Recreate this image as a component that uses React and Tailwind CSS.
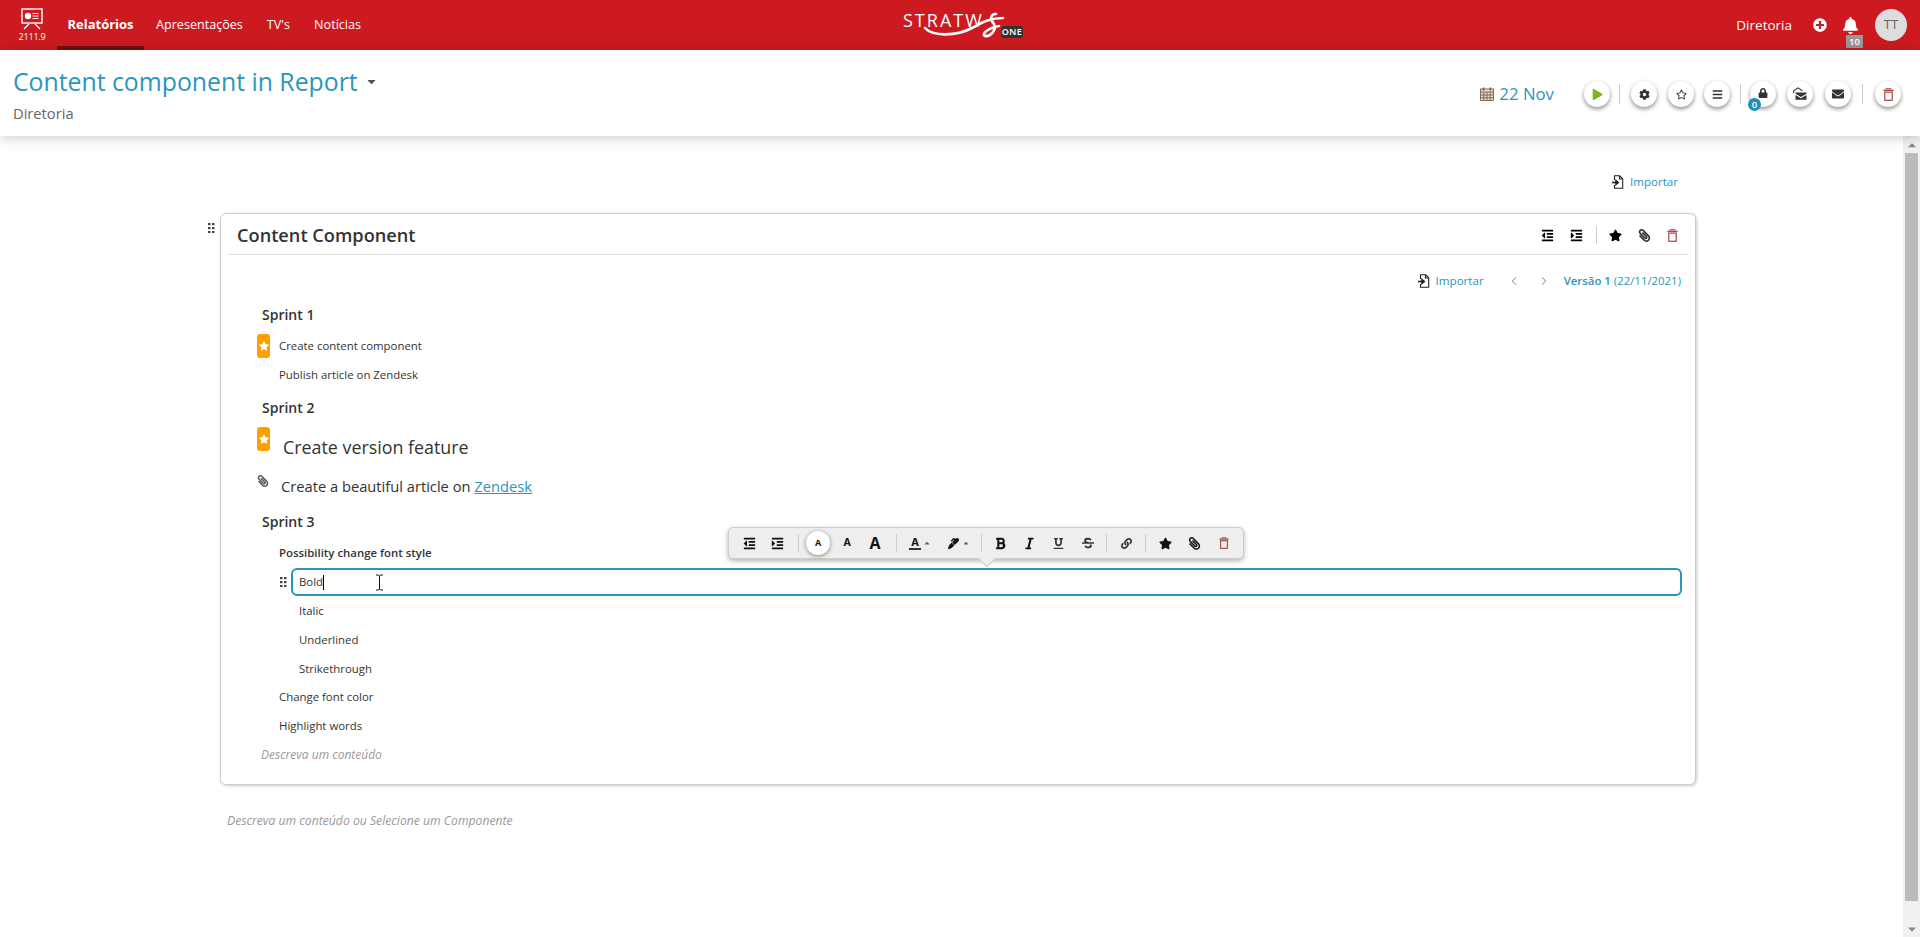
import React from "react";
import { FaOutdent, FaIndent, FaStar, FaRegStar, FaPaperclip, FaBold, FaItalic, FaUnderline, FaStrikethrough, FaLink, FaCog, FaBars, FaLock, FaEnvelope, FaPlay, FaPlusCircle, FaBell, FaCaretDown, FaCaretUp, FaMarker } from "react-icons/fa";
import { ChevronLeft, ChevronRight } from "lucide-react";

const font = { fontFamily: '"Open Sans", sans-serif' };

const Trash = ({ size = 14, color = "#a94442" }) => (
  <svg width={size} height={size} viewBox="0 0 14 14" fill="none" stroke={color}>
    <path d="M1.5 2.5h11" strokeWidth="1.4" />
    <path d="M4.5 2V.8h5V2" strokeWidth="1.1" />
    <rect x="3" y="4.4" width="8" height="8.8" strokeWidth="1.3" />
  </svg>
);

const Grip = ({ color = "#444" }) => (
  <svg width="7" height="10" viewBox="0 0 7 10" fill={color}>
    {[0, 4, 8].map((y) => (
      <g key={y}>
        <rect x="0" y={y} width="2.5" height="2.2" />
        <rect x="4" y={y} width="2.5" height="2.2" />
      </g>
    ))}
  </svg>
);

const ImportIcon = () => (
  <svg width="13" height="14" viewBox="0 0 13 14" fill="none" stroke="#222" strokeWidth="1.1">
    <path d="M3.5 5V.8h5.2l3 3v9.4h-8.2V10" />
    <path d="M8.5 1v3h3" />
    <path d="M1 7.5h4.5" strokeWidth="1.6" />
    <path d="M4.8 5.2l2.8 2.3-2.8 2.3z" fill="#222" />
  </svg>
);

const Calendar = () => (
  <svg width="14" height="14" viewBox="0 0 14 14" fill="none" stroke="#6b5a45" strokeWidth="0.9">
    <rect x="0.6" y="2" width="12.8" height="11.4" fill="#f3e3cc" />
    <path d="M.6 5h12.8M.6 8h12.8M.6 10.8h12.8M3.8 5v8.4M7 5v8.4M10.2 5v8.4" />
    <path d="M3.6.6v3M10.4.6v3" strokeWidth="1.6" />
  </svg>
);

const EnvelopeStack = () => (
  <svg width="14" height="14" viewBox="0 0 14 14">
    <path d="M.7 6V3.8L5 .8l4.3 3" fill="none" stroke="#333" strokeWidth="1.1" />
    <path d="M2.5 5.5h11v1.2L8 10 2.5 6.7z" fill="#333" />
    <path d="M2.5 8v4.8h11V8L8 11.3z" fill="#333" />
  </svg>
);

const RoundBtn = ({ children, extra }) => (
  <div className="relative w-[26px] h-[26px] rounded-full bg-white shadow-[0_2px_4px_rgba(0,0,0,0.45)] flex items-center justify-center shrink-0">
    {children}
    {extra}
  </div>
);

const Sep = ({ h = "h-5" }) => <div className={`w-px ${h} bg-[#ccc] shrink-0`} />;

const Sprint = ({ children, cls = "" }) => (
  <div className={`h-[28px] flex items-center pl-[41px] text-[14px] font-semibold text-[#333] ${cls}`}>{children}</div>
);

const Item = ({ children, cls = "pl-[58px]", extra }) => (
  <div className={`relative h-[29px] flex items-center text-[11.4px] text-[#333] ${cls}`}>
    {extra}
    {children}
  </div>
);

const StarBadge = ({ cls }) => (
  <div className={`absolute left-[36px] w-[13px] h-[24px] rounded-[3px] bg-[#ffa000] flex items-center justify-center ${cls}`}>
    <FaStar size={10} color="#fff" />
  </div>
);

const ToolBtn = ({ children, w = "w-[29px]" }) => (
  <div className={`${w} h-[24px] flex items-center justify-center shrink-0`}>{children}</div>
);

const Clip = ({ size = 13, color = "#333", className = "" }) => (
  <FaPaperclip size={size} color={color} className={`-scale-x-100 ${className}`} />
);

export default function App() {
  return (
    <div className="h-[937px] w-[1920px] overflow-hidden flex flex-col bg-white" style={font}>
      <header className="h-[50px] bg-[#cc1a20] grid grid-cols-[1fr_auto_1fr] items-stretch text-white shrink-0">
        <div className="flex items-stretch">
          <div className="w-[57px] flex flex-col items-center pt-[8px] pl-[7px]">
            <svg width="22" height="22" viewBox="0 0 22 22" fill="none" stroke="#fff">
              <rect x="1" y="1" width="20" height="14" strokeWidth="1.4" />
              <circle cx="7" cy="8" r="3.2" fill="#fff" stroke="none" />
              <path d="M11.5 5.5h6M11.5 8h6M11.5 10.5h6" strokeWidth="1.2" />
              <path d="M8 16l-5 5M14 16l5 5" strokeWidth="1.4" />
            </svg>
            <span className="text-[9px] leading-[12px] mt-[1px] tracking-[-0.2px]">2111.9</span>
          </div>
          <div className="w-[87px] flex items-center justify-center text-[13px] font-bold border-b-4 border-[#6b0f10] pt-[4px]">Relatórios</div>
          <div className="flex items-center text-[12.6px] ml-[12px] gap-[24px]">
            <span>Apresentações</span>
            <span>TV's</span>
            <span>Notícias</span>
          </div>
        </div>
        <div className="relative w-[120px] ml-[6px]">
          <div className="text-[18px] leading-[20px] tracking-[2px] mt-[10px]">STRATW</div>
          <svg className="absolute left-0 top-0" width="120" height="50" viewBox="903 0 120 50" fill="none" stroke="#fff" strokeWidth="2.6" strokeLinecap="round">
            <path d="M925 28c7 8 30 9 47 0 8-4 16-10 31-10" />
            <path d="M996 14c-6 0-6 6-2 10 3 6-4 13-9 12-4-2 3-8 14-10" />
          </svg>
          <span className="absolute left-[98px] top-[26px] w-[22px] h-[12px] bg-[#333] rounded-[3px] text-[9px] leading-[12px] text-center font-semibold tracking-[0.5px]">ONE</span>
        </div>
        <div className="flex items-center justify-end">
          <span className="text-[13.5px]">Diretoria</span>
          <FaPlusCircle size={14} className="ml-[21px]" />
          <div className="relative ml-[15px] w-[17px] flex justify-center">
            <FaBell size={17} />
            <span className="absolute left-[4px] top-[18px] w-[17px] h-[13px] bg-[#999] rounded-[1px] text-[9.5px] leading-[13px] text-center font-semibold">10</span>
          </div>
          <div className="ml-[16px] mr-[13px] w-[32px] h-[32px] rounded-full bg-[#ddd] text-[#666] text-[13px] flex items-center justify-center">TT</div>
        </div>
      </header>

      <section className="h-[86px] shrink-0 flex justify-between shadow-[0_2px_12px_rgba(0,0,0,0.2)] relative z-10 bg-white">
        <div className="pl-[13px] pt-[14px]">
          <div className="flex items-center text-[#2a96bd] text-[24.8px] leading-[34px]">
            Content component in Report
            <FaCaretDown size={13} color="#555" className="ml-[7px]" />
          </div>
          <div className="text-[14.7px] leading-[18px] text-[#666] mt-[6px]">Diretoria</div>
        </div>
        <div className="flex items-center h-[88px] pr-[19px]">
          <Calendar />
          <span className="ml-[5px] text-[#2a96bd] text-[16.8px]">22 Nov</span>
          <div className="ml-[30px]"><RoundBtn><FaPlay size={11} color="#7ab51d" className="ml-[1px]" /></RoundBtn></div>
          <div className="ml-[9px]"><Sep /></div>
          <div className="ml-[11px]"><RoundBtn><FaCog size={11} color="#333" /></RoundBtn></div>
          <div className="ml-[11px]"><RoundBtn><FaRegStar size={11} color="#333" /></RoundBtn></div>
          <div className="ml-[10px]"><RoundBtn><FaBars size={11} color="#333" /></RoundBtn></div>
          <div className="ml-[10px]"><Sep /></div>
          <div className="ml-[9px]">
            <RoundBtn extra={<span className="absolute left-[-2px] top-[17px] w-[13px] h-[13px] rounded-full bg-[#1f8fb8] text-white text-[9.5px] leading-[13px] text-center font-semibold">0</span>}>
              <FaLock size={10} color="#333" className="mt-[-3px]" />
            </RoundBtn>
          </div>
          <div className="ml-[11px]"><RoundBtn><EnvelopeStack /></RoundBtn></div>
          <div className="ml-[12px]"><RoundBtn><FaEnvelope size={12} color="#333" /></RoundBtn></div>
          <div className="ml-[11px]"><Sep /></div>
          <div className="ml-[12px]"><RoundBtn><Trash size={13} /></RoundBtn></div>
        </div>
      </section>

      <div className="flex-1 flex min-h-0">
        <main className="flex-1 pl-[220px] pt-[37px]">
          <div className="w-[1476px] h-[18px] flex items-center justify-end pr-[18px] text-[11.6px] text-[#2a96bd]">
            <ImportIcon />
            <span className="ml-[6px]">Importar</span>
          </div>
          <div className="relative w-[1476px] mt-[22px] border border-[#ccc] rounded-[6px] shadow-[1px_1px_3px_rgba(0,0,0,0.2)] bg-white">
            <div className="absolute left-[-13px] top-[9px]"><Grip /></div>
            <div className="mx-[7px] h-[41px] pt-[2px] border-b border-[#e0e0e0] flex items-center justify-between pl-[9px] pr-[9px]">
              <span className="text-[18.2px] font-semibold text-[#333] mt-[2px]">Content Component</span>
              <div className="flex items-center text-black">
                <FaOutdent size={13} />
                <FaIndent size={13} className="ml-[16px]" />
                <div className="ml-[13px]"><Sep h="h-[18px]" /></div>
                <FaStar size={13} className="ml-[12px]" />
                <Clip className="ml-[16px]" />
                <div className="ml-[15px]"><Trash size={13} /></div>
              </div>
            </div>
            <div className="mt-[16px] h-[20px] flex items-center justify-end pr-[14px] text-[11.6px] text-[#2a96bd]">
              <ImportIcon />
              <span className="ml-[6px]">Importar</span>
              <ChevronLeft size={14} strokeWidth={1.4} color="#666" className="ml-[23px]" />
              <ChevronRight size={14} strokeWidth={1.4} color="#666" className="ml-[16px]" />
              <span className="ml-[13px] font-semibold text-[11.4px]">Versão 1</span>
              <span className="ml-[3px] text-[11.4px]">(22/11/2021)</span>
            </div>
            <div className="relative pt-[9px] pb-[15px]">
              <Sprint>Sprint 1</Sprint>
              <Item cls="pl-[58px] mt-[3px]" extra={<StarBadge cls="top-[3px]" />}>Create content component</Item>
              <Item>Publish article on Zendesk</Item>
              <Sprint cls="mt-[4px]">Sprint 2</Sprint>
              <div className="relative h-[52px] flex items-center pl-[62px] text-[17.85px] text-[#333]">
                <StarBadge cls="top-[6px]" />
                Create version feature
              </div>
              <div className="relative h-[26px] flex items-center pl-[60px] text-[14.7px] text-[#333]">
                <Clip size={12} color="#555" className="absolute left-[36px] top-[2px]" />
                <span>Create a beautiful article on <span className="text-[#2a96bd] underline">Zendesk</span></span>
              </div>
              <Sprint cls="mt-[8px]">Sprint 3</Sprint>
              <Item cls="pl-[58px] mt-[3px] font-semibold">Possibility change font style</Item>
              <div className="relative mt-[1px] ml-[70px] mr-[13px] h-[28px] border-2 border-[#2a96bd] rounded-[6px] flex items-center pl-[6px] text-[11.4px] text-[#333] bg-white">
                <div className="absolute left-[-13px] top-[7px]"><Grip /></div>
                <span>Bold</span>
                <span className="w-px h-[15px] bg-black" />
                <svg className="absolute left-[82px] top-[4px]" width="9" height="17" viewBox="0 0 9 17" fill="none" stroke="#111" strokeWidth="1">
                  <path d="M1 1h2.5L4.5 2l1-1H8M4.5 2v13M1 16h2.5l1-1 1 1H8" />
                </svg>
                <div className="absolute left-[435px] top-[-43px] w-[516px] h-[32px] bg-[#eee] border border-[#ccc] rounded-[5px] shadow-[0_2px_5px_rgba(0,0,0,0.3)] flex items-center pl-[6px]">
                  <ToolBtn w="w-[28px]"><FaOutdent size={13} color="#111" /></ToolBtn>
                  <ToolBtn w="w-[28px]"><FaIndent size={13} color="#111" /></ToolBtn>
                  <div className="ml-[7px] mr-[7px]"><Sep h="h-[18px]" /></div>
                  <div className="w-[24px] h-[24px] rounded-full bg-white shadow-[0_1px_4px_rgba(0,0,0,0.45)] flex items-center justify-center text-[9px] font-bold text-[#111] shrink-0">A</div>
                  <div className="w-[34px] text-center text-[10.5px] font-bold text-[#111] shrink-0">A</div>
                  <div className="w-[22px] text-center text-[16px] font-bold text-[#111] shrink-0">A</div>
                  <div className="ml-[10px] mr-[8px]"><Sep h="h-[18px]" /></div>
                  <div className="w-[28px] flex items-center shrink-0 pl-[4px]">
                    <span className="text-[11px] font-bold text-[#111] border-b-2 border-[#333] leading-[12px] w-[12px] text-center">A</span>
                    <FaCaretUp size={8} color="#567" className="ml-[2px]" />
                  </div>
                  <div className="w-[30px] flex items-center shrink-0 ml-[15px]">
                    <FaMarker size={11} color="#111" />
                    <FaCaretUp size={8} color="#567" className="ml-[3px]" />
                  </div>
                  <div className="ml-[3px] mr-[4px]"><Sep h="h-[18px]" /></div>
                  <ToolBtn><FaBold size={13} color="#111" /></ToolBtn>
                  <ToolBtn><FaItalic size={13} color="#111" /></ToolBtn>
                  <ToolBtn><FaUnderline size={11} color="#333" /></ToolBtn>
                  <ToolBtn><FaStrikethrough size={12} color="#333" /></ToolBtn>
                  <div className="ml-[4px] mr-[4px]"><Sep h="h-[18px]" /></div>
                  <ToolBtn w="w-[30px]"><FaLink size={11} color="#333" /></ToolBtn>
                  <div className="ml-[4px] mr-[5px]"><Sep h="h-[18px]" /></div>
                  <ToolBtn><FaStar size={13} color="#111" /></ToolBtn>
                  <ToolBtn><Clip size={13} color="#222" /></ToolBtn>
                  <ToolBtn><Trash size={12} /></ToolBtn>
                  <div className="absolute left-[252px] bottom-[-7px] w-[12px] h-[12px] rotate-45 bg-[#eee] border-r border-b border-[#ccc]" />
                </div>
              </div>
              <Item cls="pl-[78px]">Italic</Item>
              <Item cls="pl-[78px]">Underlined</Item>
              <Item cls="pl-[78px]">Strikethrough</Item>
              <div className="h-[28px] flex items-center pl-[58px] text-[11.4px] text-[#333]">Change font color</div>
              <Item>Highlight words</Item>
              <div className="h-[29px] flex items-center pl-[40px] italic text-[12px] text-[#999]">Descreva um conteúdo</div>
            </div>
          </div>
          <div className="mt-[27px] ml-[7px] h-[18px] flex items-center text-[12.2px] italic text-[#999]">Descreva um conteúdo ou Selecione um Componente</div>
        </main>
        <div className="relative w-[17px] shrink-0 bg-[#f1f1f1] flex flex-col items-center">
          <div className="h-[17px] flex items-center"><FaCaretUp size={12} color="#888" /></div>
          <div className="w-[13px] h-[748px] bg-[#bbb]" />
          <div className="flex-1 flex items-end pb-[2px]"><FaCaretDown size={12} color="#888" /></div>
        </div>
      </div>
    </div>
  );
}
